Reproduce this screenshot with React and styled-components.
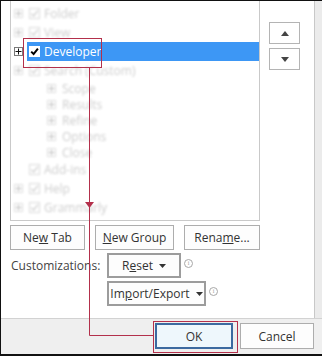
import React from "react";
import styled, { createGlobalStyle } from "styled-components";

const GlobalStyle = createGlobalStyle`
  html, body { margin: 0; padding: 0; background: #fff; }
  body { font-family: "Open Sans", "Noto Sans", sans-serif; color: #333; }
`;

const Frame = styled.div`
  position: relative;
  width: 322px;
  height: 356px;
  box-sizing: border-box;
  border-top: 1px solid #111;
  border-left: 1px solid #111;
  border-bottom: 2px solid #111;
  display: flex;
  flex-direction: column;
  overflow: hidden;
`;

const Body = styled.div`
  display: flex;
  height: 317px;
`;

const Main = styled.div`
  width: 313px;
  padding-left: 9px;
  box-sizing: border-box;
  background: #fff;
`;

const Strip = styled.div`
  flex: 1;
  border-left: 1px solid #c8c8c8;
  background: #ebebeb;
`;

const TopRow = styled.div`
  display: flex;
  height: 220px;
`;

const Tree = styled.div`
  width: 250px;
  box-sizing: border-box;
  border: 1px solid #c9c9c9;
  border-top: none;
  padding-top: 3px;
`;

const Row = styled.div`
  display: flex;
  align-items: center;
  height: ${({ $h }) => $h}px;
  padding-left: ${({ $indent }) => $indent}px;
  ${({ $faded }) => $faded && `filter: blur(0.9px); opacity: 0.27;`}
`;

const Expander = styled.span`
  width: 9px;
  height: 9px;
  box-sizing: border-box;
  flex: none;
  border: 1px solid ${({ $dark }) => ($dark ? "#7a7a7a" : "#888")};
  display: flex;
  align-items: center;
  justify-content: center;
  visibility: ${({ $hidden }) => ($hidden ? "hidden" : "visible")};
  svg { display: block; }
`;

const Item = styled.div`
  flex: 1;
  display: flex;
  align-items: center;
  align-self: stretch;
  margin-left: 4px;
  padding-left: 2px;
  gap: 4px;
  background: ${({ $selected }) => ($selected ? "#3d97f5" : "transparent")};
  color: ${({ $selected }) => ($selected ? "#fff" : "#444")};
  font-size: 12px;
`;

const SubLabel = styled.span`
  margin-left: 6px;
  font-size: 12px;
  color: #444;
`;

const Check = styled.span`
  width: 11px;
  height: 11px;
  box-sizing: border-box;
  background: #fff;
  border: 1px solid ${({ $selected }) => ($selected ? "#fff" : "#777")};
  display: flex;
  align-items: center;
  justify-content: center;
  flex: none;
`;

const MoveCol = styled.div`
  display: flex;
  flex-direction: column;
  gap: 4px;
  margin-left: 9px;
  padding-top: 21px;
`;

const MoveButton = styled.div`
  width: 31px;
  height: 22px;
  box-sizing: border-box;
  border: 1px solid #b4b4b4;
  background: #fff;
  display: flex;
  align-items: center;
  justify-content: center;
`;

const ButtonRow = styled.div`
  display: flex;
  gap: 10px;
  margin-top: 4px;
`;

const Button = styled.div`
  width: ${({ $w }) => $w}px;
  height: ${({ $strong }) => ($strong ? 25 : 25)}px;
  box-sizing: border-box;
  border: ${({ $strong }) => ($strong ? "2px solid #9c9c9c" : "1px solid #adadad")};
  background: #fdfdfd;
  display: flex;
  align-items: center;
  justify-content: center;
  gap: 6px;
  font-size: 12px;
  color: #333;
`;

const ButtonText = styled.span`
  white-space: pre;
  u { text-decoration: underline; text-underline-offset: 1px; }
`;

const Custom = styled.div`
  display: grid;
  grid-template-columns: 97px auto;
  row-gap: 3px;
  margin-top: 3px;
  align-items: center;
`;

const Label = styled.div`
  font-size: 12px;
  color: #444;
  padding-left: 1px;
`;

const ActionLine = styled.div`
  display: flex;
  align-items: center;
  gap: 3px;
  grid-column: 2;
`;

const Info = styled.span`
  width: 9px;
  height: 9px;
  box-sizing: border-box;
  border: 1px solid #a8a8a8;
  border-radius: 50%;
  font-size: 6px;
  line-height: 7px;
  text-align: center;
  color: #999;
  font-family: "Liberation Serif", serif;
  margin-top: -4px;
`;

const Footer = styled.div`
  flex: 1;
  background: #efefef;
  border-top: 1px solid #d2d2d2;
  display: flex;
  justify-content: flex-end;
  align-items: flex-start;
  gap: 7px;
  padding: 4px 8px 0 0;
`;

const DialogButton = styled.div`
  width: ${({ $primary }) => ($primary ? 78 : 74)}px;
  height: 26px;
  box-sizing: border-box;
  border: ${({ $primary }) => ($primary ? "2px solid #3c6aa0" : "1px solid #adadad")};
  background: ${({ $primary }) => ($primary ? "#eef7fc" : "#fdfdfd")};
  display: flex;
  align-items: center;
  justify-content: center;
  font-size: 12px;
  color: #333;
`;

const Overlay = styled.svg`
  position: absolute;
  left: -1px;
  top: -1px;
  pointer-events: none;
`;

const Plus = () => (
  <svg width="7" height="7" viewBox="0 0 7 7">
    <path d="M0.5 3.5h6M3.5 0.5v6" stroke="#111" strokeWidth="1" />
  </svg>
);

const Tick = ({ bold }) => (
  <svg width="9" height="9" viewBox="0 0 9 9">
    <path
      d="M1.2 4.6 L3.6 7 L7.9 1.6"
      fill="none"
      stroke={bold ? "#000" : "#555"}
      strokeWidth={bold ? 2 : 1.3}
    />
  </svg>
);

const Triangle = ({ up }) => (
  <svg width="8" height="5" viewBox="0 0 8 5">
    <path d={up ? "M0 5 L4 0 L8 5Z" : "M0 0 L8 0 L4 5Z"} fill="#444" />
  </svg>
);

const Caret = () => (
  <svg width="7" height="4" viewBox="0 0 7 4">
    <path d="M0 0 L7 0 L3.5 4Z" fill="#333" />
  </svg>
);

const rows = [
  { label: "Folder", kind: "top" },
  { label: "View", kind: "top" },
  { label: "Developer", kind: "top", selected: true },
  { label: "Search (Custom)", kind: "top" },
  { label: "Scope", kind: "sub" },
  { label: "Results", kind: "sub" },
  { label: "Refine", kind: "sub" },
  { label: "Options", kind: "sub" },
  { label: "Close", kind: "sub" },
  { label: "Add-ins", kind: "top", noExpander: true },
  { label: "Help", kind: "top" },
  { label: "Grammarly", kind: "top" },
];

const TreeRow = ({ row }) => {
  if (row.kind === "sub") {
    return (
      <Row $h={16} $indent={36} $faded>
        <Expander><Plus /></Expander>
        <SubLabel>{row.label}</SubLabel>
      </Row>
    );
  }
  return (
    <Row $h={19} $indent={3} $faded={!row.selected}>
      <Expander $hidden={row.noExpander} $dark={row.selected}><Plus /></Expander>
      <Item $selected={row.selected}>
        <Check $selected={row.selected}><Tick bold={row.selected} /></Check>
        {row.label}
      </Item>
    </Row>
  );
};

const Annotation = () => (
  <Overlay width="322" height="356" viewBox="0 0 322 356">
    <g fill="none" stroke="#b3304b" strokeWidth="1">
      <rect x="23.5" y="38.5" width="78" height="29" />
      <path d="M89.5 67.5 V335.5 H153.5" />
      <rect x="153.5" y="321.5" width="84" height="31" />
    </g>
    <path d="M85 202 L94 202 L89.5 208Z" fill="#b3304b" />
  </Overlay>
);

export default function App() {
  return (
    <>
      <GlobalStyle />
      <Frame>
        <Body>
          <Main>
            <TopRow>
              <Tree>
                {rows.map((r) => (
                  <TreeRow key={r.label} row={r} />
                ))}
              </Tree>
              <MoveCol>
                <MoveButton><Triangle up /></MoveButton>
                <MoveButton><Triangle /></MoveButton>
              </MoveCol>
            </TopRow>
            <ButtonRow>
              <Button $w={75}><ButtonText>Ne<u>w</u> Tab</ButtonText></Button>
              <Button $w={79}><ButtonText><u>N</u>ew Group</ButtonText></Button>
              <Button $w={76}><ButtonText>Rena<u>m</u>e...</ButtonText></Button>
            </ButtonRow>
            <Custom>
              <Label>Customizations:</Label>
              <ActionLine>
                <Button $w={74} $strong><ButtonText>R<u>e</u>set</ButtonText><Caret /></Button>
                <Info>i</Info>
              </ActionLine>
              <ActionLine>
                <Button $w={99} $strong><ButtonText>Im<u>p</u>ort/Export</ButtonText><Caret /></Button>
                <Info>i</Info>
              </ActionLine>
            </Custom>
          </Main>
          <Strip />
        </Body>
        <Footer>
          <DialogButton $primary>OK</DialogButton>
          <DialogButton>Cancel</DialogButton>
        </Footer>
        <Annotation />
      </Frame>
    </>
  );
}
